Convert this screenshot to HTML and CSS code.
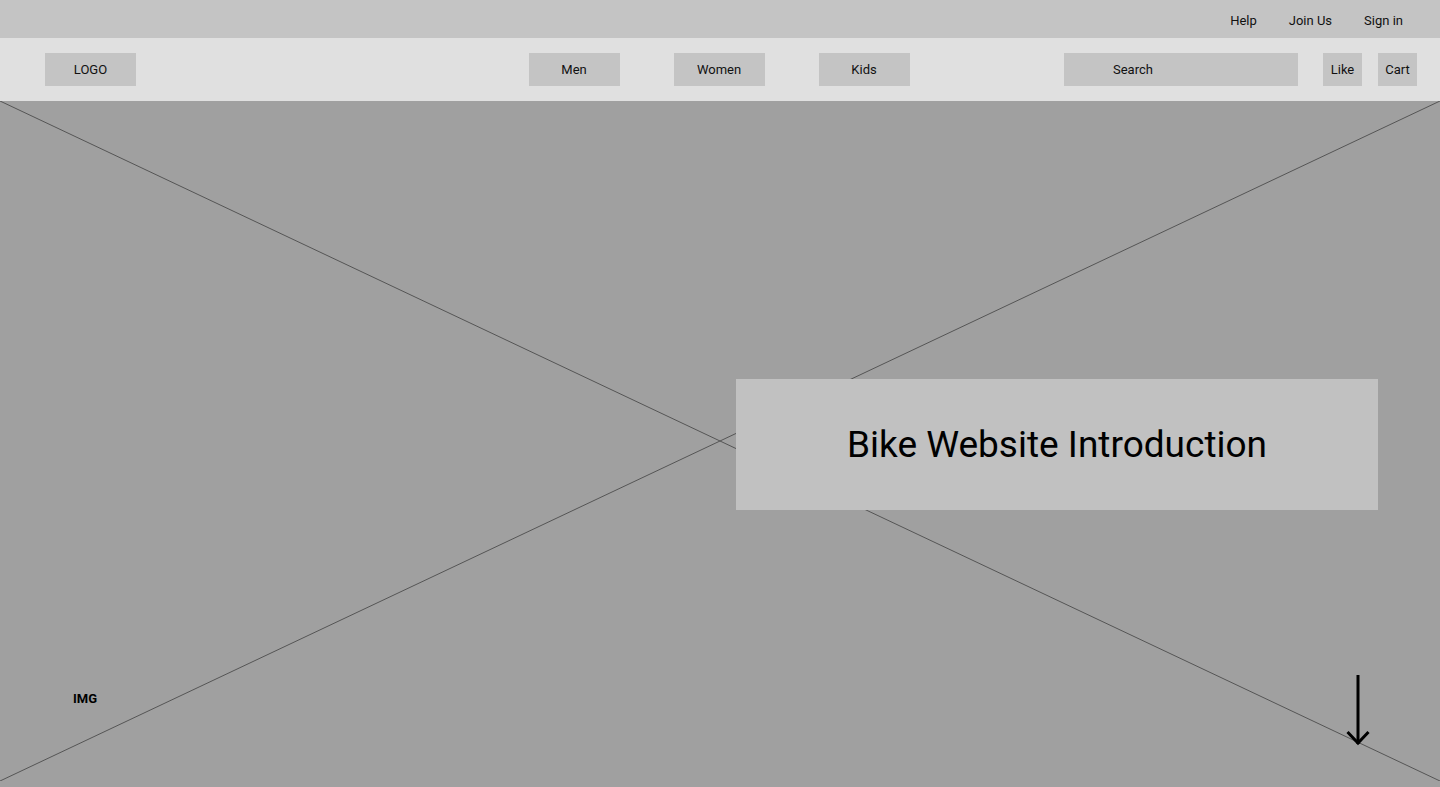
FILE: index.html
```html
<!DOCTYPE html>
<html lang="en">
<head>
<meta charset="utf-8">
<title>Bike Website</title>
<link rel="stylesheet" href="styles.css">
</head>
<body>
<header class="topbar">
  <a class="toplink">Help</a>
  <a class="toplink">Join Us</a>
  <a class="toplink">Sign in</a>
</header>
<nav class="navbar">
  <div class="nav-left">
    <div class="btn logo">LOGO</div>
  </div>
  <div class="nav-mid">
    <div class="btn">Men</div>
    <div class="btn">Women</div>
    <div class="btn">Kids</div>
  </div>
  <div class="nav-right">
    <div class="search">Search</div>
    <div class="btn small">Like</div>
    <div class="btn small">Cart</div>
  </div>
</nav>
<main class="hero">
  <svg class="cross" viewBox="0 0 1440 680" preserveAspectRatio="none" aria-hidden="true">
    <line x1="0" y1="0" x2="1440" y2="680" />
    <line x1="1440" y1="0" x2="0" y2="680" />
  </svg>
  <div class="intro"><h1>Bike Website Introduction</h1></div>
  <div class="hero-bottom">
    <span class="img-label">IMG</span>
    <svg class="arrow" width="24" height="76" viewBox="0 0 24 76" aria-hidden="true">
      <line x1="12" y1="3" x2="12" y2="72" />
      <polyline points="1.5,60 12,71 22.5,60" />
    </svg>
  </div>
</main>
</body>
</html>
```
FILE: styles.css
```css
* { box-sizing: border-box; }
html, body { margin: 0; padding: 0; }
body {
  font-family: Roboto, "Liberation Sans", Arial, sans-serif;
  color: #000;
  width: 1440px;
  height: 787px;
  overflow: hidden;
  background: #a0a0a0;
}
.topbar {
  height: 38px;
  background: #c4c4c4;
  display: flex;
  justify-content: flex-end;
  align-items: center;
  gap: 32px;
  padding: 2px 37px 0 0;
  font-size: 13px;
}
.toplink { color: #111; }
.navbar {
  height: 63px;
  background: #e0e0e0;
  display: grid;
  grid-template-columns: 1fr auto 1fr;
  align-items: center;
  padding: 0 23px 0 21px;
  font-size: 13px;
}
.nav-left { display: flex; padding-left: 24px; }
.nav-mid { display: flex; gap: 54px; }
.nav-right { display: flex; justify-content: flex-end; gap: 16px; }
.btn {
  width: 91px;
  height: 33px;
  background: #c4c4c4;
  display: flex;
  align-items: center;
  justify-content: center;
  color: #111;
}
.btn.small { width: 39px; }
.search {
  width: 234px;
  height: 33px;
  background: #c4c4c4;
  display: flex;
  align-items: center;
  padding-left: 49px;
  margin-right: 9px;
  color: #111;
}
.hero {
  position: relative;
  height: 686px;
  background: #a0a0a0;
  display: flex;
  flex-direction: column;
}
.cross {
  position: absolute;
  left: 0;
  top: 0;
  width: 100%;
  height: 680px;
}
.cross line { stroke: #555; stroke-width: 1; vector-effect: non-scaling-stroke; }
.intro {
  position: relative;
  margin-top: 278px;
  margin-left: 736px;
  width: 642px;
  height: 131px;
  background: #c1c1c1;
  display: flex;
  align-items: center;
  justify-content: center;
}
.intro h1 {
  margin: 0;
  font-weight: 400;
  font-size: 37px;
  color: #000;
}
.hero-bottom {
  position: relative;
  margin-top: 162px;
  display: flex;
  justify-content: space-between;
  align-items: flex-start;
  padding: 0 70px 0 73px;
}
.img-label {
  margin-top: 19px;
  font-size: 13px;
  line-height: 16px;
  font-weight: 700;
}
.arrow line, .arrow polyline {
  stroke: #000;
  stroke-width: 3;
  fill: none;
}
```
